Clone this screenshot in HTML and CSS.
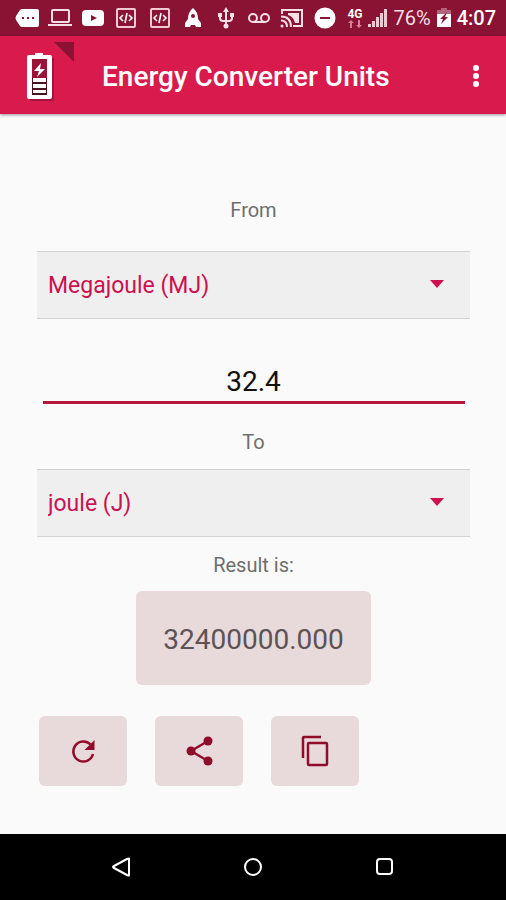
FILE: index.html
```html
<!DOCTYPE html>
<html lang="en">
<head>
  <meta charset="UTF-8" />
  <meta name="viewport" content="width=device-width, initial-scale=1.0"/>
  <title>Energy Converter Units</title>
  <link rel="stylesheet" href="styles.css">
</head>
<body>

  <div class="status-bar">
    <div class="status-icons">
      <!-- messages -->
      <svg width="24" height="20" viewBox="0 0 24 20"><path fill="#fff" d="M7 1h15a2 2 0 0 1 2 2v14a2 2 0 0 1-2 2H7q-1 0-2-1L1 12q-1-2 0-4l4-6q1-1 2-1z"/><path fill="#8a1233" d="M7 9h2v2H7zM12 9h2v2h-2zM17 9h2v2h-2z"/></svg>
      <!-- laptop -->
      <svg width="24" height="20" viewBox="0 0 24 20"><rect x="4" y="2" width="17" height="12" rx="1" fill="none" stroke="#f6dfe5" stroke-width="2"/><path fill="#f6dfe5" d="M0 16h24v2H0z"/></svg>
      <!-- video -->
      <svg width="24" height="20" viewBox="0 0 24 20"><rect x="1" y="2" width="22" height="16" rx="4" fill="#fff"/><path fill="#8a1233" d="M10 7l6 3-6 3z"/></svg>
      <!-- code -->
      <svg width="24" height="20" viewBox="-2 0 24 20"><rect x="1" y="1" width="18" height="18" rx="1" fill="none" stroke="#efc9d3" stroke-width="2"/><path fill="none" stroke="#fff" stroke-width="1.6" d="M7 7l-3 3 3 3M13 7l3 3-3 3M11 5l-2 10"/></svg>
      <svg width="24" height="20" viewBox="-2 0 24 20"><rect x="1" y="1" width="18" height="18" rx="1" fill="none" stroke="#efc9d3" stroke-width="2"/><path fill="none" stroke="#fff" stroke-width="1.6" d="M7 7l-3 3 3 3M13 7l3 3-3 3M11 5l-2 10"/></svg>
      <!-- rocket -->
      <svg width="24" height="22" viewBox="-2 0 24 22"><path fill="#fff" d="M10 1q5 4 5 11l3 4v4h-5l-1-2H8l-1 2H2v-4l3-4Q5 5 10 1z"/><circle cx="10" cy="9" r="2" fill="#8a1233"/></svg>
      <!-- usb -->
      <svg width="24" height="22" viewBox="-2 0 24 22"><path fill="none" stroke="#f6dfe5" stroke-width="2" d="M10 3v16M4 8v3q0 3 3 3h6q3 0 3-3V8"/><path fill="#f6dfe5" d="M10 0l3 5H7zM2 6h4v4H2zM14 6h4v4h-4z"/><circle cx="10" cy="19" r="2.500" fill="#f6dfe5"/></svg>
      <!-- voicemail -->
      <svg width="24" height="20" viewBox="0 0 24 20"><g fill="none" stroke="#f6dfe5" stroke-width="2"><circle cx="6" cy="10" r="4"/><circle cx="18" cy="10" r="4"/><path d="M6 14h12"/></g></svg>
      <!-- cast -->
      <svg width="24" height="20" viewBox="0 0 24 20"><path fill="#f6dfe5" fill-rule="evenodd" d="M1 1h22v18H13v-2h8V3H3v3H1z"/><path fill="#f6dfe5" d="M8 5h11v10h-4Q13 8 8 7z"/><path fill="none" stroke="#f6dfe5" stroke-width="2" d="M1 8.500q10 0 10 10.500M1 12.500q6 0 6 6.500"/><circle cx="2" cy="18" r="1.500" fill="#f6dfe5"/></svg>
      <!-- do not disturb -->
      <svg width="24" height="22" viewBox="-1 0 24 22"><circle cx="11" cy="11" r="10.500" fill="#fff"/><path fill="#8a1233" d="M6 10h10v2H6z"/></svg>
    </div>
    <div class="status-info">
      <div class="network">
        <span>4G</span>
        <svg width="14" height="8" viewBox="0 0 14 8"><path fill="#d87f96" d="M3 0l3 3H4v5H2V3H0zM11 8l3-3h-2V0h-2v5H8z"/></svg>
      </div>
      <!-- signal -->
      <svg width="19" height="20" viewBox="0 0 19 20"><path fill="#f0c8d2" d="M0 16h3v3H0zM4 13h3v6H4zM8 9h3v10H8zM12 5h3v14h-3zM16 1h3v18h-3z"/></svg>
      <span class="percent">76%</span>
      <!-- battery -->
      <svg width="14" height="20" viewBox="0 0 14 20"><path fill="#b26579" d="M4 0h6v2h4v6H0V2h4z"/><path fill="#fff" d="M0 6h14v13H0z"/><path fill="#8a1233" d="M10 4l-7 7h3l-2 5 7-7H8z"/></svg>
      <span class="time">4:07</span>
    </div>
  </div>

  <header class="app-bar">
    <svg class="logo" width="60" height="60" viewBox="0 0 60 60">
      <path fill="#8a1233" d="M34 1h20v20z"/>
      <path fill="#8a1233" opacity=".7" d="M10 17h24v41a2 2 0 0 1-2 2H10z"/>
      <path fill="#fff" d="M15 12h8v2h7a2 2 0 0 1 2 2v40a2 2 0 0 1-2 2H9a2 2 0 0 1-2-2V16a2 2 0 0 1 2-2h6z"/>
      <path fill="#9a1238" d="M12 18h15v19H12z"/>
      <path fill="#4a1020" d="M12 37h15v17H12z"/>
      <path fill="#fff" d="M21 22l-7 8h5l-2 6 8-8h-5zM13 37h13v4H13zM13 43h13v4H13zM13 49h13v3H13z"/>
    </svg>
    <h1>Energy Converter Units</h1>
    <button class="menu-btn" type="button" aria-label="More options">
      <svg width="8" height="24" viewBox="0 0 8 24"><g fill="#fff"><circle cx="4" cy="4" r="3"/><circle cx="4" cy="12" r="3"/><circle cx="4" cy="20" r="3"/></g></svg>
    </button>
  </header>

  <main class="converter">
    <label class="from-label" for="fromUnit">From</label>
    <div class="spinner">
      <select id="fromUnit">
        <option value="1000000">Megajoule (MJ)</option>
        <option value="1">joule (J)</option>
      </select>
    </div>

    <input type="text" id="amount" class="amount" inputmode="decimal" value="32.4" aria-label="Amount" />

    <label class="to-label" for="toUnit">To</label>
    <div class="spinner">
      <select id="toUnit">
        <option value="1">joule (J)</option>
        <option value="1000000">Megajoule (MJ)</option>
      </select>
    </div>

    <label class="result-label" for="result">Result is:</label>
    <output id="result" class="result" for="fromUnit amount toUnit">32400000.000</output>

    <div class="actions">
      <button type="button" aria-label="Reset">
        <svg width="28" height="28" viewBox="0 0 28 28"><path fill="none" stroke="#8f0d2b" stroke-width="2.500" d="M21.500 7.500A10 10 0 1 0 24 17"/><path fill="#8f0d2b" d="M25.500 3v10h-10z"/></svg>
      </button>
      <button type="button" aria-label="Share">
        <svg width="28" height="30" viewBox="0 0 28 30"><path fill="none" stroke="#8f0d2b" stroke-width="2.500" d="M23 5L6 15l17 10"/><g fill="#8f0d2b"><circle cx="23" cy="5" r="4.500"/><circle cx="6" cy="15" r="4.500"/><circle cx="23" cy="25" r="4.500"/></g></svg>
      </button>
      <button type="button" aria-label="Copy">
        <svg width="28" height="32" viewBox="0 0 28 32"><g fill="none" stroke="#8f0d2b" stroke-width="2.500"><path d="M2 23V3q0-1 1-1h17"/><rect x="7" y="8" width="19" height="22" rx="1"/></g></svg>
      </button>
    </div>
  </main>

  <nav class="nav-bar">
    <button type="button" aria-label="Back">
      <svg width="20" height="20" viewBox="0 0 20 20"><path fill="none" stroke="#fff" stroke-width="2" stroke-linejoin="round" d="M18 1.500v17q-1 0-2-.5L3 11q-2-1 0-2L16 2q1-.5 2-.5z"/></svg>
    </button>
    <button type="button" aria-label="Home">
      <svg width="20" height="20" viewBox="0 0 20 20"><circle cx="10" cy="10" r="8" fill="none" stroke="#fff" stroke-width="2"/></svg>
    </button>
    <button type="button" aria-label="Recent apps">
      <svg width="20" height="20" viewBox="0 0 20 20"><rect x="2" y="2" width="15" height="15" rx="3" fill="none" stroke="#fff" stroke-width="2"/></svg>
    </button>
  </nav>

  <script>
    const fromUnit = document.getElementById("fromUnit");
    const toUnit = document.getElementById("toUnit");
    const amount = document.getElementById("amount");

    function convert() {
      const value = Number(amount.value) * Number(fromUnit.value) / Number(toUnit.value);
      document.getElementById("result").textContent = value.toFixed(3);
    }

    fromUnit.addEventListener("change", convert);
    toUnit.addEventListener("change", convert);
    amount.addEventListener("input", convert);
  </script>

</body>
</html>
```
FILE: styles.css
```css
* {
  box-sizing: border-box;
}

body {
  font-family: Roboto, sans-serif;
  background: #fafafa;
  margin: 0;
  min-height: 100vh;
  display: flex;
  flex-direction: column;
  color: #6e6e6e;
}

svg {
  display: block;
  flex: none;
}

button {
  border: none;
  padding: 0;
  background: none;
  display: flex;
  align-items: center;
  justify-content: center;
  cursor: pointer;
}

.status-bar {
  display: flex;
  align-items: center;
  gap: 10px;
  height: 36px;
  padding: 0 10px 0 15px;
  background: #8a1233;
  color: #fff;
}

.status-icons {
  flex: 1;
  display: flex;
  align-items: center;
  justify-content: space-between;
}

.status-info {
  display: flex;
  align-items: center;
  gap: 6px;
  font-size: 20px;
}

.network {
  display: flex;
  flex-direction: column;
  align-items: center;
  font-size: 12px;
  line-height: 12px;
  font-weight: bold;
}

.percent {
  color: #f6dfe5;
}

.time {
  font-weight: 500;
}

.app-bar {
  display: flex;
  align-items: center;
  height: 78px;
  padding: 2px 20px 0;
  background: #d81b4c;
  color: #fff;
  box-shadow: 0 1px 3px rgba(0, 0, 0, 0.4);
}

.logo {
  align-self: flex-end;
  margin-bottom: 13px;
}

.app-bar h1 {
  flex: 1;
  margin: 0 0 0 22px;
  font-size: 28px;
  font-weight: 500;
}

.menu-btn {
  width: 20px;
  height: 48px;
}

.converter {
  flex: 1;
  display: flex;
  flex-direction: column;
  align-items: center;
  padding: 84px 36px 48px 37px;
}

.converter label {
  font-size: 20px;
  line-height: 24px;
}

.spinner {
  position: relative;
  width: 100%;
}

.spinner::after {
  content: "";
  position: absolute;
  top: 29px;
  right: 26px;
  border: 7px solid transparent;
  border-top: 8px solid #d00f50;
  border-bottom: none;
  pointer-events: none;
}

.spinner select {
  display: block;
  width: 100%;
  height: 68px;
  padding: 0 48px 0 11px;
  appearance: none;
  background: #efefef;
  border: solid #d2d2d2;
  border-width: 1px 0;
  border-radius: 0;
  font-family: inherit;
  font-size: 23px;
  color: #cb1150;
}

.from-label {
  margin-bottom: 29px;
}

.amount {
  width: calc(100% - 11px);
  height: 44px;
  margin: 41px 0 26px;
  padding: 2px 0 0;
  border: none;
  border-bottom: 3px solid #b8143c;
  background: none;
  font-family: inherit;
  font-size: 28px;
  text-align: center;
  color: #111;
}

.to-label {
  margin-bottom: 15px;
}

.result-label {
  margin: 16px 0 14px;
}

.result {
  padding: 32px 27px 28px;
  border-radius: 6px;
  background: #e8d9da;
  font-size: 28px;
  line-height: 34px;
  color: #5d5255;
}

.actions {
  align-self: flex-start;
  display: flex;
  gap: 28px;
  margin: 31px 0 0 2px;
}

.actions button {
  width: 88px;
  height: 70px;
  border-radius: 6px;
  background: #e8d9da;
}

.nav-bar {
  display: flex;
  align-items: center;
  justify-content: space-around;
  height: 66px;
  padding: 0 11%;
  background: #000;
}

.nav-bar button {
  width: 48px;
  height: 48px;
}
```
